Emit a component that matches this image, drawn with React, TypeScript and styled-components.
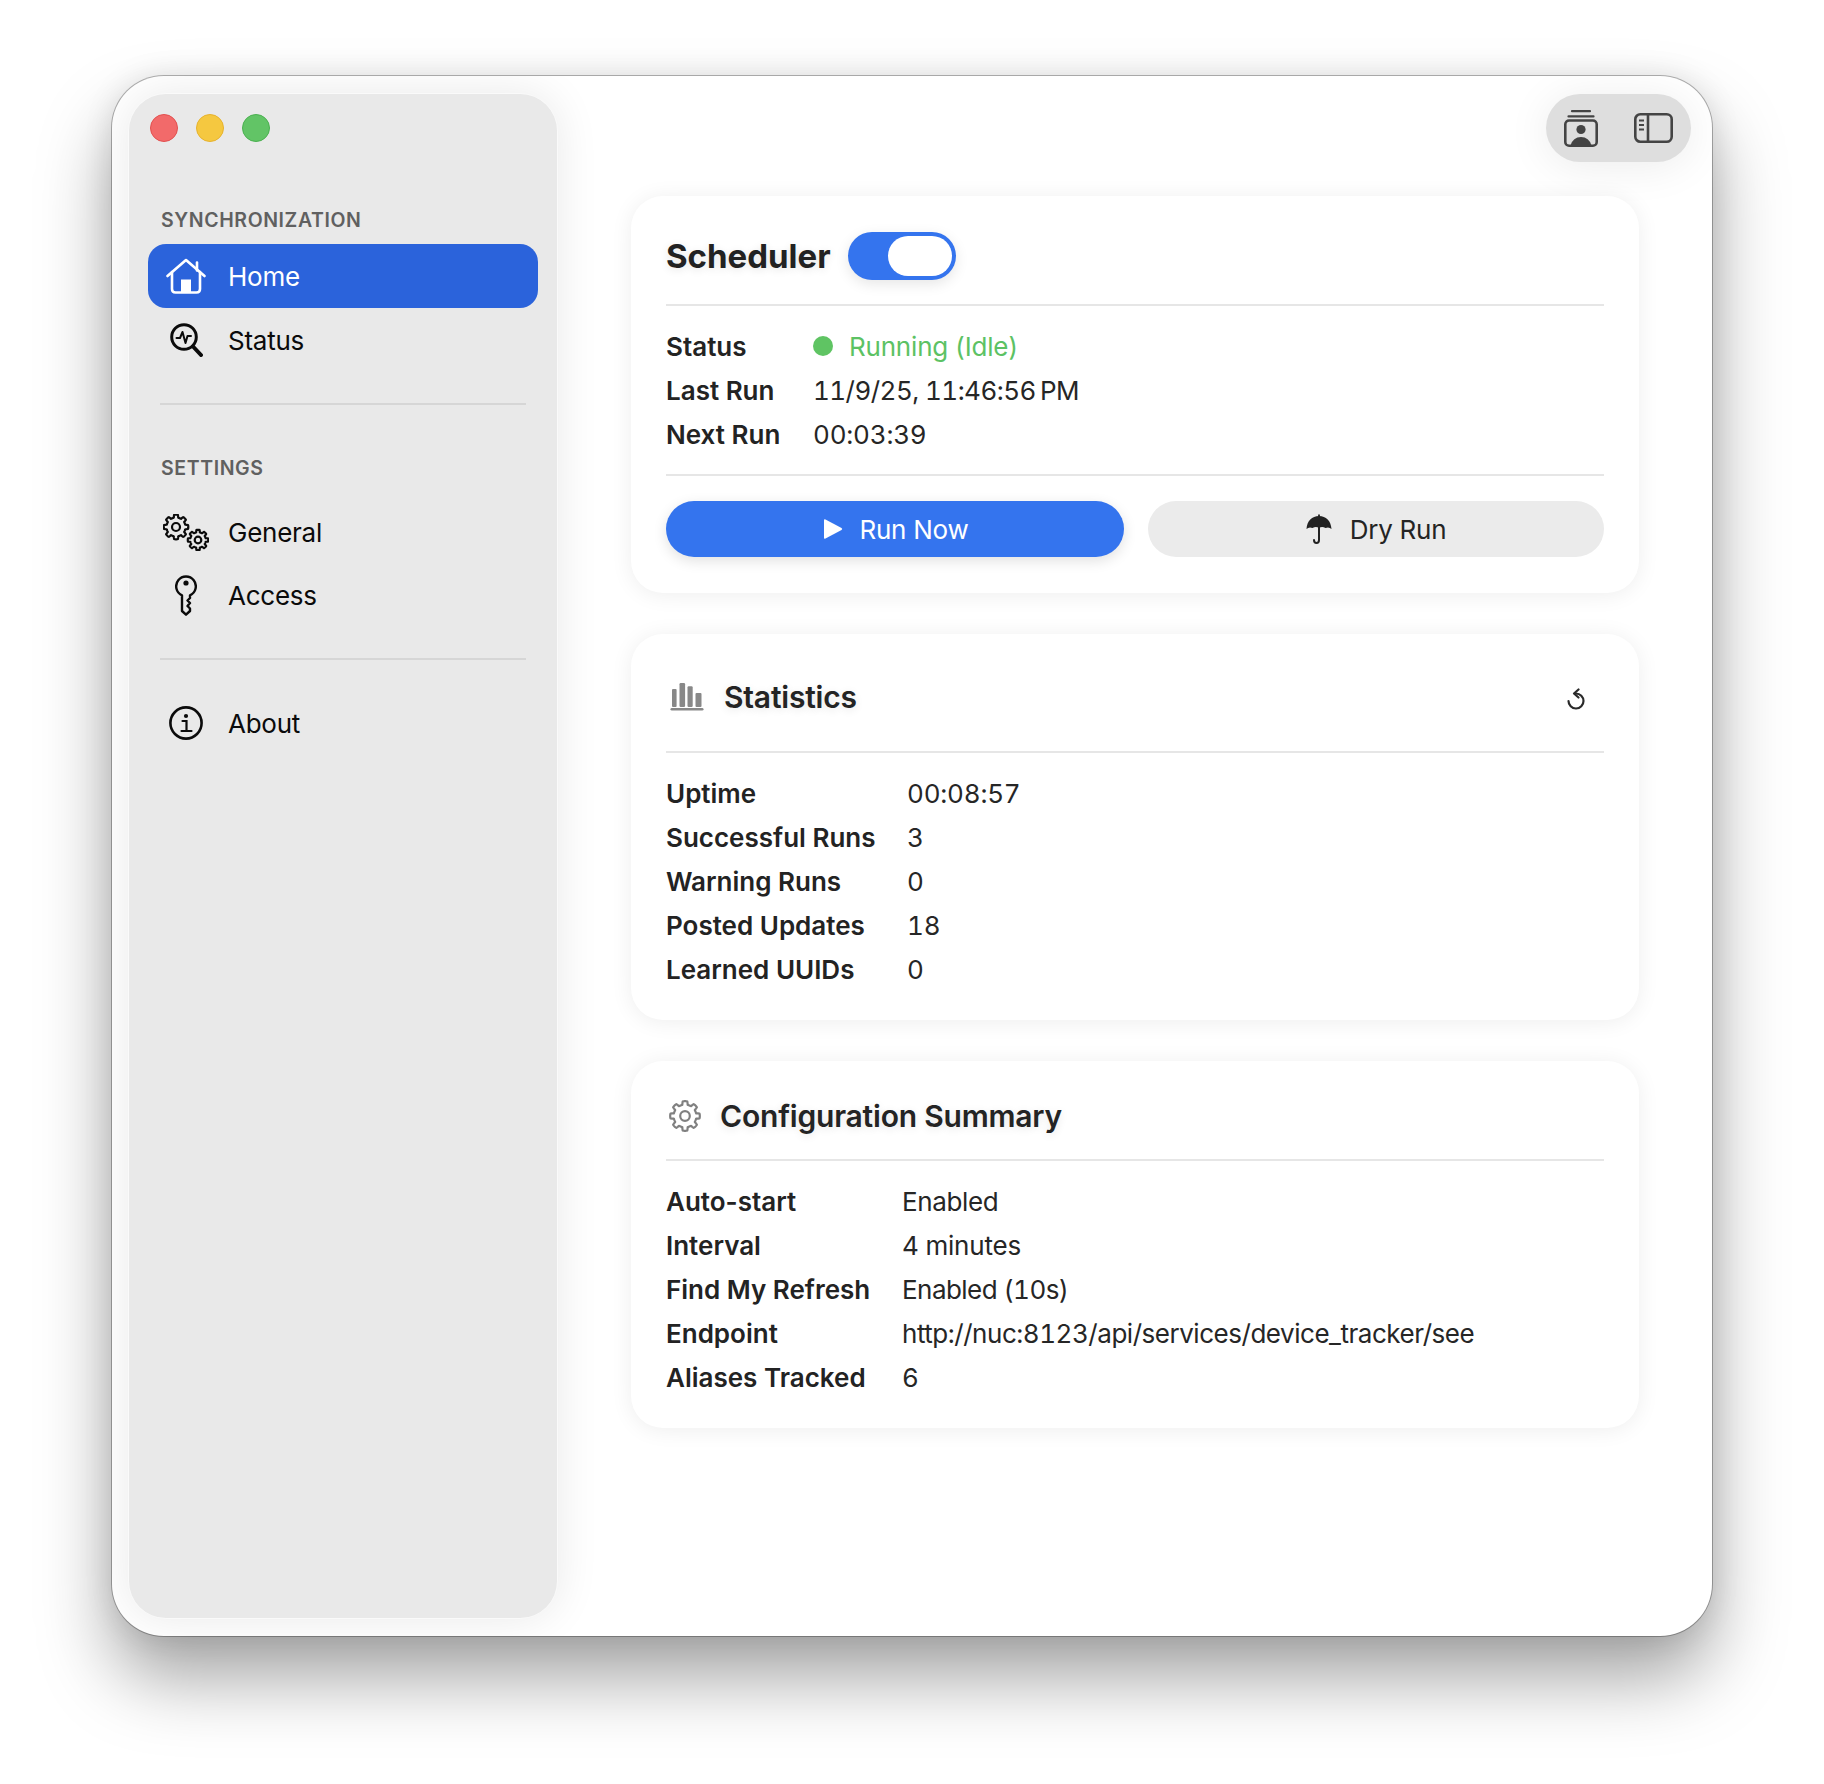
import React from "react";
import styled, { createGlobalStyle } from "styled-components";

const GlobalStyle = createGlobalStyle`
  html, body {
    margin: 0;
    padding: 0;
    background: #fff;
  }
  * {
    box-sizing: border-box;
  }
  body {
    font-family: Inter, "Liberation Sans", sans-serif;
    -webkit-font-smoothing: antialiased;
  }
`;

const Page = styled.div`
  width: 1824px;
  height: 1784px;
  padding: 76px 112px 0;
  overflow: hidden;
`;

const Window = styled.div`
  width: 1600px;
  height: 1560px;
  display: flex;
  background: #fff;
  border-radius: 52px;
  overflow: hidden;
  box-shadow: 0 0 0 1px rgba(0, 0, 0, 0.28), 0 42px 72px rgba(0, 0, 0, 0.36), 0 0 30px rgba(0, 0, 0, 0.1);
  padding: 17px 0 17px 16px;
`;

const Sidebar = styled.aside`
  width: 430px;
  flex: none;
  display: flex;
  flex-direction: column;
  padding: 20px 19px 0 19px;
  background: #e9e9e9;
  border-radius: 38px;
  border: 1px solid rgba(255, 255, 255, 0.75);
  box-shadow: 0 0 44px rgba(0, 0, 0, 0.09);
`;

const Lights = styled.div`
  display: flex;
  gap: 18px;
  margin-left: 2px;
  margin-bottom: 66px;
`;

const Light = styled.span<{ $fill: string; $edge: string }>`
  width: 28px;
  height: 28px;
  border-radius: 50%;
  background: ${(p) => p.$fill};
  border: 1px solid ${(p) => p.$edge};
`;

const SectionLabel = styled.div<{ $after: number }>`
  height: 24px;
  line-height: 24px;
  padding-left: 13px;
  margin-bottom: ${(p) => p.$after}px;
  font-size: 19.5px;
  font-weight: 600;
  letter-spacing: 0.6px;
  color: #606060;
`;

const NavRow = styled.div<{ $active?: boolean; $height?: number }>`
  height: ${(p) => p.$height ?? 64}px;
  display: flex;
  align-items: center;
  gap: 22px;
  padding-left: 18px;
  border-radius: 18px;
  font-size: 26px;
  letter-spacing: -0.25px;
  color: ${(p) => (p.$active ? "#fff" : "#0b0b0b")};
  background: ${(p) => (p.$active ? "#2b63db" : "transparent")};
`;

const IconSlot = styled.span`
  width: 40px;
  flex: none;
  display: flex;
  justify-content: center;
  align-items: center;

  svg {
    flex: none;
  }
`;

const SideDivider = styled.div<{ $after: number }>`
  height: 2px;
  margin: 31px 12px ${(p) => p.$after}px 12px;
  background: #d6d6d6;
`;

const Main = styled.main`
  flex: 1;
  min-width: 0;
  display: flex;
  flex-direction: column;
  padding: 1px 73px 0 73px;
`;

const Toolbar = styled.div`
  display: flex;
  justify-content: flex-end;
  margin-right: -52px;
  margin-bottom: 34px;
`;

const ToolCapsule = styled.div`
  width: 145px;
  height: 68px;
  display: flex;
  align-items: center;
  padding-left: 18px;
  gap: 36px;
  border-radius: 34px;
  background: #dedede;
  box-shadow: 0 4px 44px rgba(0, 0, 0, 0.08);
`;

const Cards = styled.div`
  display: flex;
  flex-direction: column;
  gap: 41px;
`;

const Card = styled.section<{ $bottom: number }>`
  padding: 0 35px ${(p) => p.$bottom}px;
  background: #fff;
  border-radius: 32px;
  box-shadow: 0 2px 22px rgba(0, 0, 0, 0.07);
`;

const CardHead = styled.header<{ $height: number; $top: number; $gap: number }>`
  height: ${(p) => p.$height}px;
  padding-top: ${(p) => p.$top}px;
  display: flex;
  align-items: center;
  gap: ${(p) => p.$gap}px;
  border-bottom: 2px solid #e6e6e6;
`;

const SchedulerTitle = styled.h1`
  margin: 0;
  font-size: 33px;
  font-weight: 700;
  color: #222;
  text-shadow: 0 2px 8px rgba(0, 0, 0, 0.1);
`;

const CardTitle = styled.h2`
  margin: 0;
  flex: 1;
  font-size: 30px;
  font-weight: 600;
  letter-spacing: -0.2px;
  color: #242424;
  text-shadow: 0 2px 8px rgba(0, 0, 0, 0.1);
`;

const HeadIcon = styled.span<{ $left: number }>`
  display: flex;
  margin-left: ${(p) => p.$left}px;
`;

const RefreshSlot = styled.span`
  display: flex;
  margin-right: 18px;
  margin-top: 4px;
`;

const Toggle = styled.div`
  width: 108px;
  height: 48px;
  display: flex;
  justify-content: flex-end;
  align-items: center;
  padding-right: 4px;
  border-radius: 24px;
  background: #3474ee;
  box-shadow: 0 4px 14px rgba(0, 0, 0, 0.1);
`;

const ToggleKnob = styled.span`
  width: 64px;
  height: 40px;
  border-radius: 20px;
  background: #fff;
`;

const Rows = styled.div<{ $labelWidth: number }>`
  display: grid;
  grid-template-columns: ${(p) => p.$labelWidth}px 1fr;
  grid-auto-rows: 44px;
  align-items: center;
  padding-top: 18px;
  font-size: 26px;
`;

const Label = styled.span`
  font-weight: 600;
  color: #232323;
`;

const Value = styled.span<{ $spacing?: number }>`
  display: flex;
  align-items: center;
  font-variant-numeric: tabular-nums;
  letter-spacing: ${(p) => p.$spacing ?? -0.2}px;
  color: #262626;
`;

const StatusDot = styled.span`
  width: 20px;
  height: 20px;
  margin-right: 16px;
  border-radius: 50%;
  background: #5fc463;
`;

const StatusText = styled.span`
  color: #5cc264;
`;

const ActionBar = styled.div`
  display: flex;
  gap: 24px;
  margin-top: 18px;
  padding-top: 25px;
  border-top: 2px solid #e6e6e6;
`;

const ActionButton = styled.button<{ $primary?: boolean }>`
  flex: 1;
  height: 56px;
  display: flex;
  align-items: center;
  justify-content: center;
  gap: ${(p) => (p.$primary ? 16 : 18)}px;
  padding: 0 0 0 ${(p) => (p.$primary ? 2 : 0)}px;
  border: 0;
  border-radius: 28px;
  font-family: inherit;
  font-size: 26px;
  letter-spacing: -0.25px;
  color: ${(p) => (p.$primary ? "#fff" : "#242424")};
  background: ${(p) => (p.$primary ? "#3474ee" : "#ebebeb")};
  box-shadow: ${(p) => (p.$primary ? "0 4px 14px rgba(0, 0, 0, 0.12)" : "none")};
`;

// draws a lobed gear outline, the same one is used at every size
const gearPath = (cx: number, cy: number, outer: number, inner: number) => {
  const points: string[] = [];
  for (let i = 0; i < 160; i++) {
    const a = (i / 160) * Math.PI * 2;
    const wave = Math.max(0, Math.min(1, Math.cos(a * 8) * 1.5 + 0.5));
    const r = inner + (outer - inner) * wave;
    points.push(`${(cx + Math.cos(a) * r).toFixed(2)} ${(cy + Math.sin(a) * r).toFixed(2)}`);
  }
  return `M${points.join("L")}Z`;
};

const HomeIcon = () => (
  <svg width="40" height="36" viewBox="0 0 40 36" fill="none" stroke="#fff" strokeWidth="2.6" strokeLinecap="round" strokeLinejoin="round">
    <path d="M1.5 18 20 2l18.500 16" />
    <path d="M31 4.500v8" />
    <path d="M6 14v17q0 3.500 3.500 3.500h21q3.500 0 3.500-3.500V14" />
    <rect x="15" y="21.500" width="10" height="13" fill="#fff" stroke="none" />
  </svg>
);

const StatusIcon = () => (
  <svg width="34" height="34" viewBox="0 0 34 34" fill="none" stroke="#0b0b0b" strokeLinecap="round" strokeLinejoin="round">
    <circle cx="15" cy="14" r="12.300" strokeWidth="3" />
    <path d="M24 23.500 32 32" strokeWidth="4" />
    <path d="M7.500 15H11l2.500-6 3 11 2-7h3.500" strokeWidth="2" />
  </svg>
);

const GeneralIcon = () => (
  <svg width="46" height="37" viewBox="0 0 46 37" fill="none" stroke="#0b0b0b" strokeWidth="2.2" strokeLinejoin="round">
    <path d={gearPath(13, 13, 12.300, 9.500)} />
    <circle cx="13" cy="13" r="4" />
    <path d={gearPath(35, 26, 10.200, 7.800)} />
    <circle cx="35" cy="26" r="3.300" />
  </svg>
);

const KeyIcon = () => (
  <svg width="22" height="41" viewBox="0 0 22 41" fill="none" stroke="#0b0b0b" strokeWidth="2.400" strokeLinejoin="round">
    <path d="M7 20.300A9.800 9.800 0 1 1 15 20.300V23l-2.500 2.500L15 28l-2.500 3L15 33.500v2.500L11 39.700 7 36Z" />
    <circle cx="11" cy="8" r="2.600" fill="#0b0b0b" stroke="none" />
  </svg>
);

const InfoIcon = () => (
  <svg width="34" height="34" viewBox="0 0 34 34" fill="none" stroke="#0b0b0b" strokeLinecap="round">
    <circle cx="17" cy="17" r="15.600" strokeWidth="2.600" />
    <circle cx="17" cy="10" r="2.100" fill="#0b0b0b" stroke="none" />
    <path d="M13.500 15H17.500V25M12.500 25H22.500" strokeWidth="2.200" />
  </svg>
);

const PlayIcon = () => (
  <svg width="20" height="22" viewBox="0 0 20 22">
    <path d="M1 2.200Q1 .6 2.500 1.400L18.500 10Q20 11 18.500 12L2.500 20.600Q1 21.400 1 19.800Z" fill="#fff" />
  </svg>
);

const UmbrellaIcon = () => (
  <svg width="26" height="30" viewBox="0 0 26 30" fill="none">
    <path d="M13 .5V3" stroke="#222" strokeWidth="1.800" />
    <path d="M13 2C6 2 1 7 .5 15Q3 12.500 6.500 14Q10 12 13 14Q16 12 19.500 14Q23 12.500 25.500 15C25 7 20 2 13 2Z" fill="#222" />
    <path d="M13 13V26Q13 29 10.500 29Q8 29 8 26" stroke="#222" strokeWidth="2" strokeLinecap="round" />
  </svg>
);

const ContactsIcon = () => (
  <svg width="34" height="37" viewBox="0 0 34 37" fill="none" stroke="#444" strokeLinecap="round">
    <path d="M8 1.200H26" strokeWidth="2.200" />
    <path d="M4.500 6.400H29.500" strokeWidth="2.200" />
    <rect x="1.300" y="10.500" width="31.400" height="25.200" rx="3.800" strokeWidth="2.600" />
    <circle cx="17" cy="19.500" r="4.600" fill="#444" stroke="none" />
    <path d="M6.500 35.500Q9 27 17 27Q25 27 27.500 35.500Z" fill="#444" stroke="none" />
  </svg>
);

const SidebarIcon = () => (
  <svg width="39" height="30" viewBox="0 0 39 30" fill="none" stroke="#444" strokeWidth="2.600">
    <rect x="1.300" y="1.300" width="36.400" height="27.400" rx="5" />
    <path d="M14 1.300V28.700" />
    <path d="M5 7.500H10M5 12H10M5 16.500H10" strokeWidth="2" />
  </svg>
);

const ChartIcon = () => (
  <svg width="34" height="28" viewBox="0 0 34 28" fill="#888">
    <rect x="2" y="6" width="4.600" height="18" rx="1" />
    <rect x="9.500" y="0" width="5.600" height="24" rx="1.200" />
    <rect x="17.500" y="3.300" width="5.200" height="20.700" rx="1.200" />
    <rect x="25.500" y="10" width="6" height="14" rx="1" />
    <rect x="0.500" y="25" width="33" height="2.600" rx="1.300" />
  </svg>
);

const ConfigIcon = () => (
  <svg width="32" height="32" viewBox="0 0 32 32" fill="none" stroke="#808080" strokeWidth="2.200" strokeLinejoin="round">
    <path d={gearPath(16, 16, 14.800, 11.400)} />
    <circle cx="16" cy="16" r="4.800" />
  </svg>
);

const RefreshIcon = () => (
  <svg width="20" height="22" viewBox="0 0 20 22" fill="none" stroke="#2a2a2a" strokeWidth="2.200" strokeLinecap="round" strokeLinejoin="round">
    <path d="M10 5.500A7.500 7.500 0 1 1 2.500 13" />
    <path d="M12.500 1.500 8 5.500l4.500 4" />
  </svg>
);

type RowData = { label: string; value: string; spacing?: number };

const statistics: RowData[] = [
  { label: "Uptime", value: "00:08:57" },
  { label: "Successful Runs", value: "3" },
  { label: "Warning Runs", value: "0" },
  { label: "Posted Updates", value: "18" },
  { label: "Learned UUIDs", value: "0" },
];

const configuration: RowData[] = [
  { label: "Auto-start", value: "Enabled", spacing: -0.35 },
  { label: "Interval", value: "4 minutes" },
  { label: "Find My Refresh", value: "Enabled (10s)", spacing: -0.55 },
  { label: "Endpoint", value: "http://nuc:8123/api/services/device_tracker/see", spacing: -0.47 },
  { label: "Aliases Tracked", value: "6" },
];

const RowList = ({ rows }: { rows: RowData[] }) => (
  <>
    {rows.map((row) => (
      <React.Fragment key={row.label}>
        <Label>{row.label}</Label>
        <Value $spacing={row.spacing}>{row.value}</Value>
      </React.Fragment>
    ))}
  </>
);

const App = () => {
  return (
    <Page>
      <GlobalStyle />
      <Window>
        <Sidebar>
          <Lights>
            <Light $fill="#f26a6a" $edge="#e2504f" />
            <Light $fill="#f5c840" $edge="#e6b22d" />
            <Light $fill="#62c466" $edge="#4bb050" />
          </Lights>
          <SectionLabel $after={12}>SYNCHRONIZATION</SectionLabel>
          <NavRow $active>
            <IconSlot><HomeIcon /></IconSlot>
            Home
          </NavRow>
          <NavRow>
            <IconSlot><StatusIcon /></IconSlot>
            Status
          </NavRow>
          <SideDivider $after={51} />
          <SectionLabel $after={21}>SETTINGS</SectionLabel>
          <NavRow $height={63}>
            <IconSlot><GeneralIcon /></IconSlot>
            General
          </NavRow>
          <NavRow $height={63}>
            <IconSlot><KeyIcon /></IconSlot>
            Access
          </NavRow>
          <SideDivider $after={31} />
          <NavRow>
            <IconSlot><InfoIcon /></IconSlot>
            About
          </NavRow>
        </Sidebar>
        <Main>
          <Toolbar>
            <ToolCapsule>
              <ContactsIcon />
              <SidebarIcon />
            </ToolCapsule>
          </Toolbar>
          <Cards>
            <Card $bottom={36}>
              <CardHead $height={110} $top={12} $gap={17}>
                <SchedulerTitle>Scheduler</SchedulerTitle>
                <Toggle><ToggleKnob /></Toggle>
              </CardHead>
              <Rows $labelWidth={147}>
                <Label>Status</Label>
                <Value>
                  <StatusDot />
                  <StatusText>Running (Idle)</StatusText>
                </Value>
                <Label>Last Run</Label>
                <Value $spacing={-0.55}>11/9/25, 11:46:56{"\u202f"}PM</Value>
                <Label>Next Run</Label>
                <Value>00:03:39</Value>
              </Rows>
              <ActionBar>
                <ActionButton $primary><PlayIcon />Run Now</ActionButton>
                <ActionButton><UmbrellaIcon />Dry Run</ActionButton>
              </ActionBar>
            </Card>
            <Card $bottom={29}>
              <CardHead $height={119} $top={8} $gap={20}>
                <HeadIcon $left={4}><ChartIcon /></HeadIcon>
                <CardTitle>Statistics</CardTitle>
                <RefreshSlot><RefreshIcon /></RefreshSlot>
              </CardHead>
              <Rows $labelWidth={241}>
                <RowList rows={statistics} />
              </Rows>
            </Card>
            <Card $bottom={29}>
              <CardHead $height={100} $top={11} $gap={19}>
                <HeadIcon $left={3}><ConfigIcon /></HeadIcon>
                <CardTitle>Configuration Summary</CardTitle>
              </CardHead>
              <Rows $labelWidth={236}>
                <RowList rows={configuration} />
              </Rows>
            </Card>
          </Cards>
        </Main>
      </Window>
    </Page>
  );
};

export default App;
